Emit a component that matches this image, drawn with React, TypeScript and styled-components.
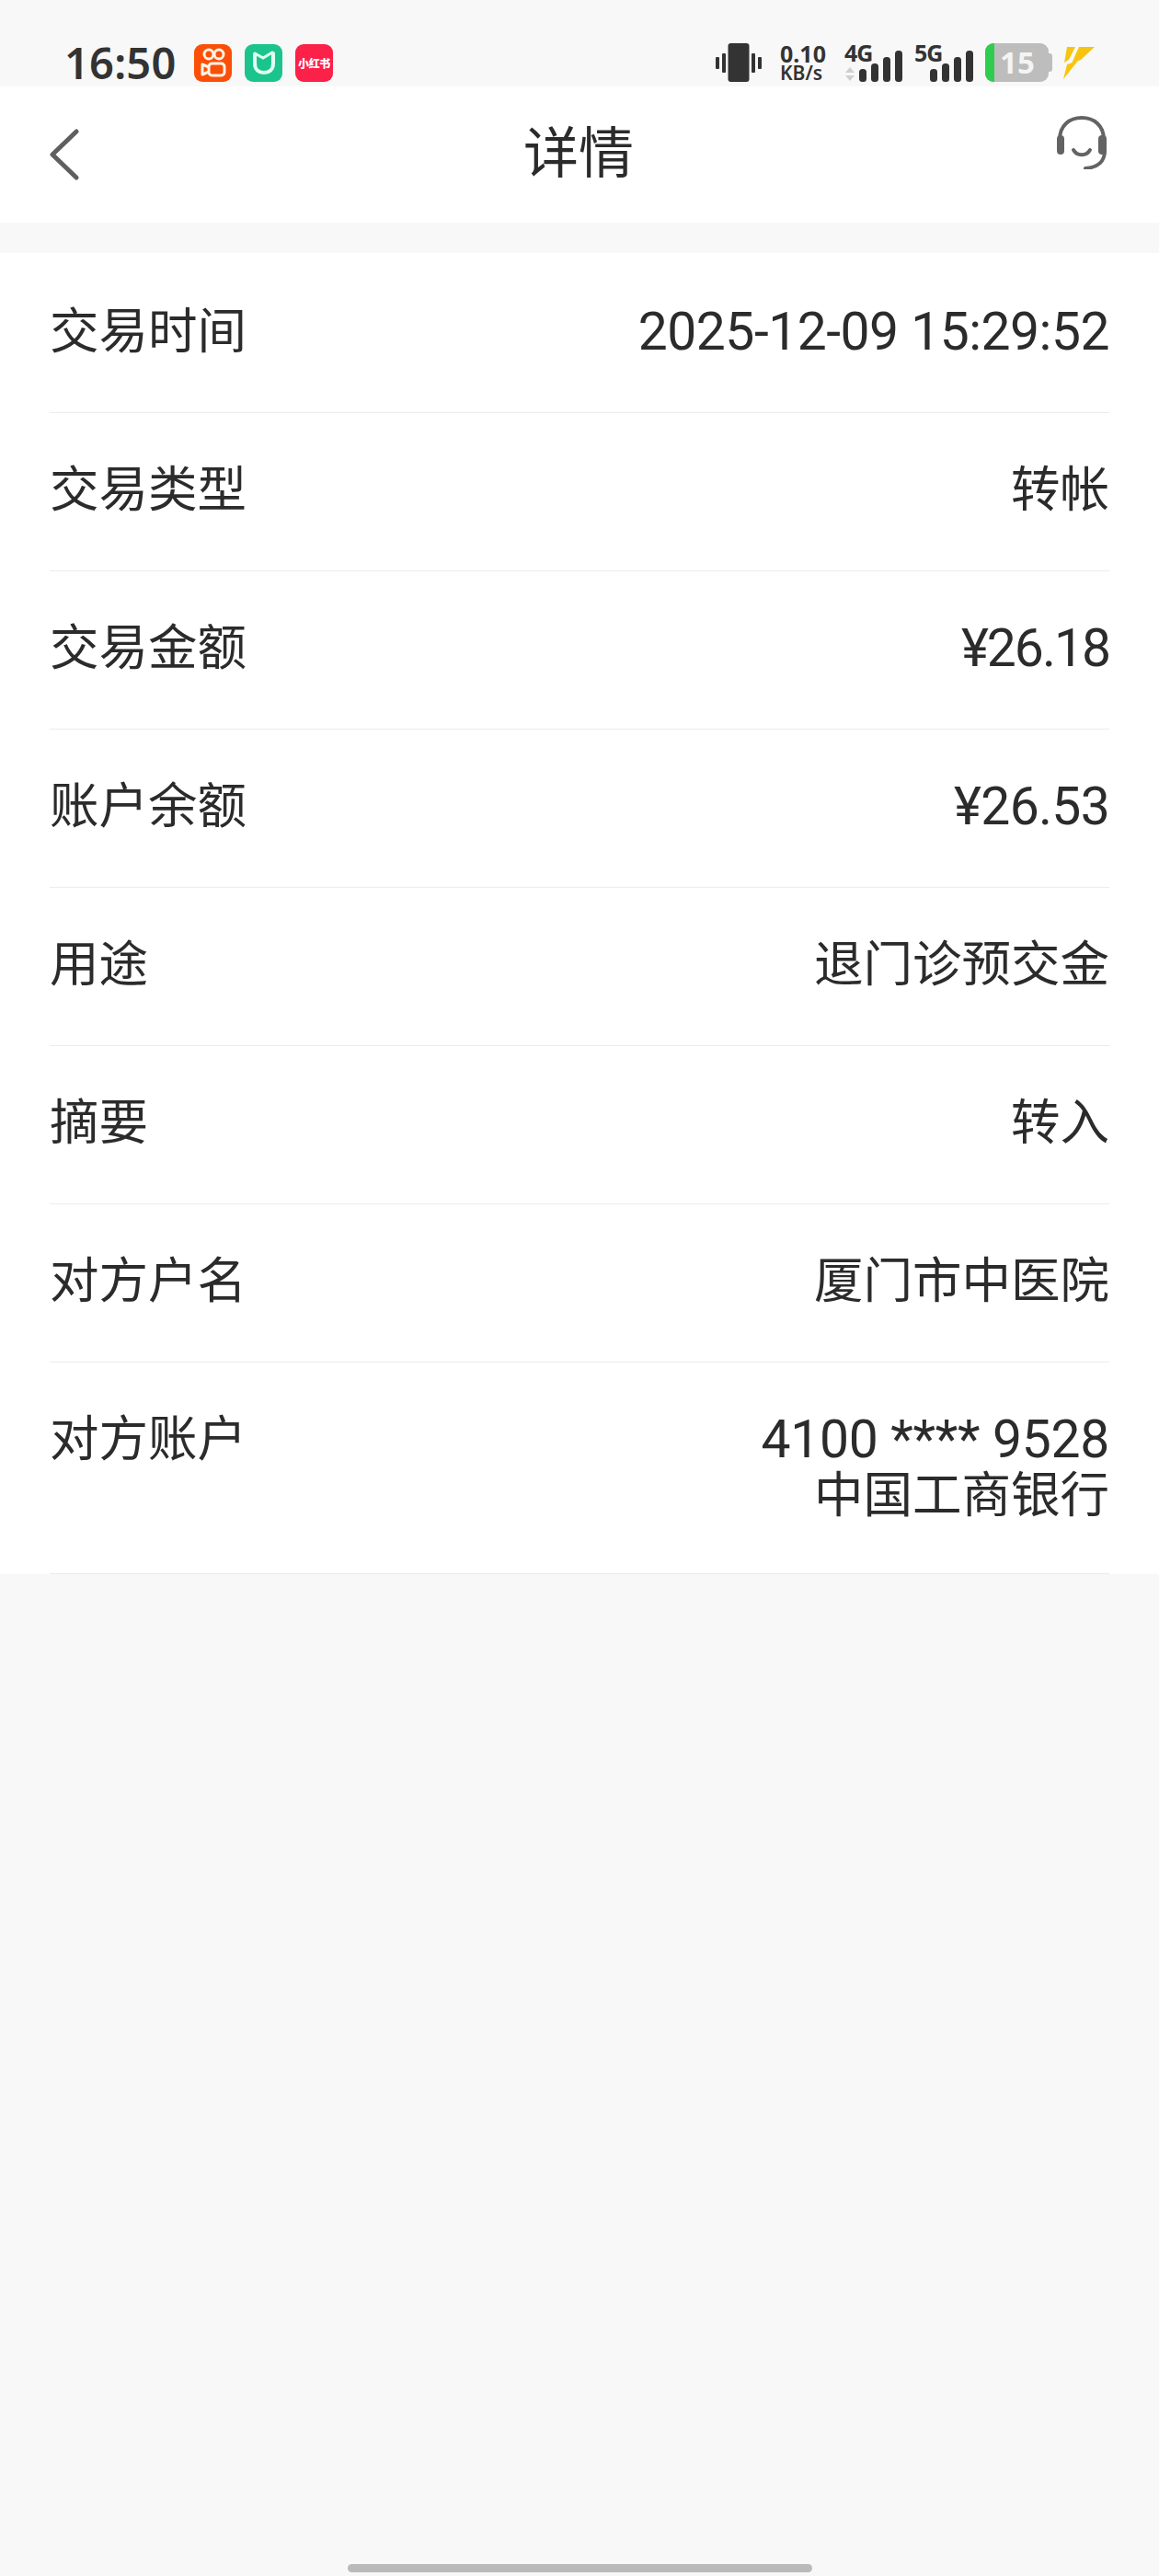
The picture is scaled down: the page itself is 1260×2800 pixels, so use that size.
import React from "react";
import styled, { createGlobalStyle } from "styled-components";

const Global = createGlobalStyle`
  html, body { margin: 0; padding: 0; background: #f8f8f8; }
  body { font-family: Roboto, "Noto Sans CJK SC", sans-serif; color: #2b2b2b; }
`;

const Page = styled.div`
  width: 1260px; height: 2800px; display: flex; flex-direction: column;
  background: #f8f8f8; overflow: hidden;
`;

const StatusBar = styled.div`
  height: 94px; box-sizing: border-box; padding: 47px 70px 5px 70px;
  display: flex; align-items: stretch; justify-content: space-between;
`;
const StatusLeft = styled.div`display: flex; align-items: center;`;
const StatusRight = styled.div`display: flex; align-items: center;`;

const Time = styled.div`
  font-family: "Noto Sans", sans-serif; font-size: 47px; font-weight: 600; line-height: 42px;
  color: #333; width: 141px; letter-spacing: 0.2px;
`;
const AppTile = styled.div<{ $bg: string; $gap?: number }>`
  width: 41px; height: 41px; border-radius: 9px; background: ${(p) => p.$bg};
  margin-right: ${(p) => p.$gap ?? 14}px;
  display: flex; align-items: center; justify-content: center; overflow: hidden;
`;
const TileText = styled.span`
  font-family: "Noto Sans CJK SC", sans-serif; font-size: 12px; font-weight: 900;
  color: #fff; white-space: nowrap; letter-spacing: -0.4px;
`;
const Speed = styled.div`
  font-family: "Noto Sans", sans-serif; color: #333; margin: 0 21px 0 20px;
  display: flex; flex-direction: column; width: 49px;
`;
const SpeedValue = styled.span`font-size: 25px; font-weight: 700; line-height: 23px;`;
const SpeedUnit = styled.span`font-size: 21px; font-weight: 600; line-height: 19px; white-space: nowrap;`;
const Network = styled.div`
  position: relative; width: 64px; height: 42px; margin-right: 12px;
`;
const NetLabel = styled.span`
  position: absolute; left: 0; top: -3px;
  font-family: "Noto Sans", sans-serif; font-size: 25px; font-weight: 700; line-height: 26px; color: #333;
  letter-spacing: -1px;
`;
const Battery = styled.div`
  width: 69px; height: 42px; border-radius: 9px; background: #bdbdbd; position: relative;
  margin-left: 1px; display: flex; align-items: center; box-sizing: border-box;
  padding-left: 16px;
`;
const BatteryFill = styled.div`
  position: absolute; left: 0; top: 0; bottom: 0; width: 10px; background: #2ecc4f;
  border-radius: 9px 0 0 9px;
`;
const BatteryText = styled.span`
  font-family: "Noto Sans", sans-serif; font-size: 33px; font-weight: 700; color: #f4f4f4; line-height: 42px;
`;
const BatteryCap = styled.div`
  width: 4px; height: 20px; background: #bdbdbd; border-radius: 0 3px 3px 0; margin-right: 11px;
`;

const Nav = styled.header`
  height: 148px; background: #fff; box-sizing: border-box; padding: 0 56px 0 54px;
  display: grid; grid-template-columns: 1fr auto 1fr; align-items: center;
`;
const BackButton = styled.div`display: flex; justify-self: start;`;
const Title = styled.h1`
  margin: 0; font-size: 60px; font-weight: 400; line-height: 80px; color: #2b2b2b;
`;
const HeadsetButton = styled.div`display: flex; justify-self: end; margin-top: -26px;`;

const Card = styled.section`
  margin-top: 33px; background: #fff; padding: 2px 54px 0;
`;
const Row = styled.div`
  display: flex; justify-content: space-between; align-items: flex-start;
  padding: 53px 0 57px; border-bottom: 1px solid #ececec;
  &:last-child { padding-bottom: 54px; }
`;
const Label = styled.div`font-size: 53.5px; line-height: 61px; color: #2b2b2b;`;
const Value = styled.div`font-size: 53.5px; line-height: 61px; color: #2b2b2b; text-align: right;`;
const Num = styled.span<{ $track: number }>`
  display: inline-block; vertical-align: top; height: 61px;
  font-family: Roboto, sans-serif; font-size: 57px; line-height: 61px;
  letter-spacing: ${(p) => p.$track}px; white-space: nowrap;
`;

const HomeBar = styled.div`
  margin: auto auto 4px; width: 505px; height: 9px; border-radius: 5px; background: #bababa;
`;

const rows: [string, React.ReactNode][] = [
  ["交易时间", <Num $track={-0.5}>2025-12-09 15:29:52</Num>],
  ["交易类型", "转帐"],
  ["交易金额", <Num $track={-2}>¥26.18</Num>],
  ["账户余额", <Num $track={-0.7}>¥26.53</Num>],
  ["用途", "退门诊预交金"],
  ["摘要", "转入"],
  ["对方户名", "厦门市中医院"],
  ["对方账户", <><Num $track={-0.3}>4100 **** 9528</Num><br />中国工商银行</>],
];

const Vibrate = () => (
  <svg width="50" height="42" viewBox="0 0 50 42" fill="#333">
    <rect x="13.5" y="0" width="23" height="42" rx="3" />
    <rect x="0" y="15" width="4" height="13" rx="1" />
    <rect x="7" y="11" width="4" height="21" rx="1" />
    <rect x="39" y="11" width="4" height="21" rx="1" />
    <rect x="46" y="15" width="4" height="13" rx="1" />
  </svg>
);

const SignalGroup = ({ x }: { x: number }) => (
  <g transform={`translate(${x} 8)`} fill="#333">
    <rect x="0" y="20" width="8" height="14" rx="3.5" />
    <rect x="13" y="14" width="8" height="20" rx="3.5" />
    <rect x="26" y="7" width="8" height="27" rx="3.5" />
    <rect x="39" y="0" width="8" height="34" rx="3.5" />
  </g>
);

const App = () => (
  <Page>
    <Global />
    <StatusBar>
      <StatusLeft>
        <Time>16:50</Time>
        <AppTile $bg="#fb4f08">
          <svg width="28" height="32" viewBox="0 0 28 32" fill="none" stroke="#fff3e6" strokeWidth="3">
            <circle cx="9" cy="7" r="5" />
            <circle cx="20" cy="7" r="5" />
            <rect x="9" y="17" width="17" height="13" rx="3.5" />
            <path d="M9 21 L2 18 V29 L9 26" strokeLinejoin="round" />
          </svg>
        </AppTile>
        <AppTile $bg="#1cc48d">
          <svg width="26" height="28" viewBox="0 0 26 28" fill="none" stroke="#dffff0" strokeWidth="4" strokeLinecap="round">
            <path d="M3 5 V15 C3 22 8 25 13 25 C18 25 23 22 23 15 V4" />
            <path d="M3 4 L12 9 L22 3" strokeWidth="3" />
          </svg>
        </AppTile>
        <AppTile $bg="#fb2148" $gap={0}>
          <TileText>小红书</TileText>
        </AppTile>
      </StatusLeft>
      <StatusRight>
        <Vibrate />
        <Speed>
          <SpeedValue>0.10</SpeedValue>
          <SpeedUnit>KB/s</SpeedUnit>
        </Speed>
        <Network>
          <NetLabel>4G</NetLabel>
          <svg width="64" height="42" viewBox="0 0 64 42">
            <path d="M6 21 L1 27 H11 Z M1 30 L6 36 L11 30 Z" fill="#cfcfcf" transform="translate(0 5)" />
            <SignalGroup x={16} />
          </svg>
        </Network>
        <Network>
          <NetLabel>5G</NetLabel>
          <svg width="64" height="42" viewBox="0 0 64 42">
            <SignalGroup x={17} />
          </svg>
        </Network>
        <Battery>
          <BatteryFill />
          <BatteryText>15</BatteryText>
        </Battery>
        <BatteryCap />
        <svg width="35" height="37" viewBox="0 0 35 37" fill="#f7c50f">
          <path d="M5 1 H14 L7 15 L2 18 Z" />
          <path d="M18 1 H35 L20 15 L10 19 Z" />
          <path d="M5 20 L17 16 L1 36 Z" />
        </svg>
      </StatusRight>
    </StatusBar>
    <Nav>
      <BackButton>
        <svg width="32" height="56" viewBox="0 0 32 56" fill="none" stroke="#5f5f5f" strokeWidth="5" strokeLinecap="round" strokeLinejoin="round">
          <path d="M29 3 L3 28 L29 53" />
        </svg>
      </BackButton>
      <Title>详情</Title>
      <HeadsetButton>
        <svg width="56" height="58" viewBox="0 0 56 58" fill="none" stroke="#636363" strokeWidth="4" strokeLinecap="round">
          <path d="M4 26 C4 10 15 2 28 2 C41 2 52 10 52 26" />
          <path d="M53 38 C53 49 46 56 32 57" />
          <path d="M19 37 C23 44 33 44 37 37" />
          <rect x="1" y="21" width="8" height="21" rx="4" fill="#636363" stroke="none" />
          <rect x="46" y="21" width="9" height="21" rx="4" fill="#636363" stroke="none" />
        </svg>
      </HeadsetButton>
    </Nav>
    <Card>
      {rows.map(([label, value]) => (
        <Row key={label}>
          <Label>{label}</Label>
          <Value>{value}</Value>
        </Row>
      ))}
    </Card>
    <HomeBar />
  </Page>
);

export default App;
